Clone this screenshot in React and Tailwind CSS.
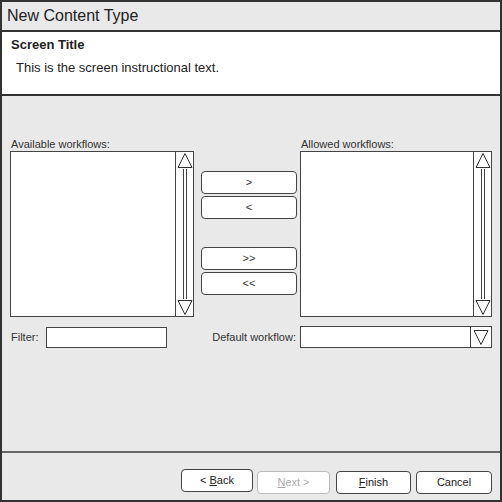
import React from "react";

const font = { fontFamily: '"Liberation Sans", Arial, sans-serif' };

function Tri({ down }) {
  return (
    <svg width="18" height="17" viewBox="0 0 18 17" className="block">
      {down ? (
        <polygon points="2,1.5 16,1.5 9,15.5" fill="white" stroke="#333" strokeWidth="1" />
      ) : (
        <polygon points="9,1.5 16,15.5 2,15.5" fill="white" stroke="#333" strokeWidth="1" />
      )}
    </svg>
  );
}

function ListBox({ width }) {
  return (
    <div className={`flex h-[166px] border border-[#444] bg-white ${width}`}>
      <div className="flex-1" />
      <div className="flex w-[18px] flex-col items-center border-l border-[#444]">
        <Tri />
        <div className="w-[4px] flex-1 border-x border-[#444]" />
        <Tri down />
      </div>
    </div>
  );
}

function MoveButton({ label }) {
  return (
    <button className="h-[23px] w-[96px] rounded-[4px] border border-[#444] bg-white text-[11px] text-[#333]">
      {label}
    </button>
  );
}

function FootButton({ width, disabled, children }) {
  return (
    <button
      className={`h-[23px] rounded-[4px] border bg-white text-[11px] ${width} ${
        disabled ? "border-[#bbb] text-[#aaa]" : "border-[#444] text-[#222]"
      }`}
    >
      {children}
    </button>
  );
}

export default function App() {
  return (
    <div style={font} className="flex h-[502px] w-[502px] flex-col border-2 border-[#333] bg-[#e9e9e9] text-[#222]">
      {/* title bar */}
      <div className="flex h-[30px] items-center border-b-2 border-[#333] px-[5px] text-[16px]">
        New Content Type
      </div>

      {/* header */}
      <div className="h-[64px] border-b-2 border-[#333] bg-white pl-[9px] pt-[5px]">
        <div className="text-[13px] font-bold leading-[15px]">Screen Title</div>
        <div className="pl-[5px] pt-[8px] text-[13px] leading-[15px]">This is the screen instructional text.</div>
      </div>

      {/* main */}
      <div className="flex-1 pl-[8px] pt-[42px]">
        <div className="flex">
          <div className="flex w-[184px] flex-col">
            <div className="pl-[1px] text-[11px] leading-[13px] text-[#333]">Available workflows:</div>
            <ListBox width="w-[184px]" />
          </div>
          <div className="ml-[7px] flex flex-col pt-[33px]">
            <div className="flex flex-col gap-[2px]">
              <MoveButton label=">" />
              <MoveButton label="<" />
            </div>
            <div className="mt-[28px] flex flex-col gap-[2px]">
              <MoveButton label=">>" />
              <MoveButton label="<<" />
            </div>
          </div>
          <div className="ml-[3px] flex w-[192px] flex-col">
            <div className="pl-[1px] text-[11px] leading-[13px] text-[#333]">Allowed workflows:</div>
            <ListBox width="w-[192px]" />
          </div>
        </div>

        <div className="mt-[9px] flex items-center text-[11px] text-[#333]">
          <span className="w-[36px] pl-[1px]">Filter:</span>
          <div className="h-[21px] w-[121px] border border-[#444] bg-white" />
          <span className="w-[133px] pr-[4px] text-right">Default workflow:</span>
          <div className="flex h-[22px] w-[192px] border border-[#444] bg-white">
            <div className="flex-1" />
            <div className="flex w-[21px] items-center justify-center border-l border-[#444]">
              <Tri down />
            </div>
          </div>
        </div>
      </div>

      {/* footer */}
      <div className="flex h-[49px] items-start justify-end border-t-2 border-[#666] pr-[8px] pt-[16px]">
        <FootButton width="w-[72px]">
          &lt; <u>B</u>ack
        </FootButton>
        <div className="ml-[4px]">
          <FootButton width="w-[73px]" disabled>
            <u>N</u>ext &gt;
          </FootButton>
        </div>
        <div className="ml-[6px]">
          <FootButton width="w-[75px]">
            <u>F</u>inish
          </FootButton>
        </div>
        <div className="ml-[5px]">
          <FootButton width="w-[76px]">Cancel</FootButton>
        </div>
      </div>
    </div>
  );
}
